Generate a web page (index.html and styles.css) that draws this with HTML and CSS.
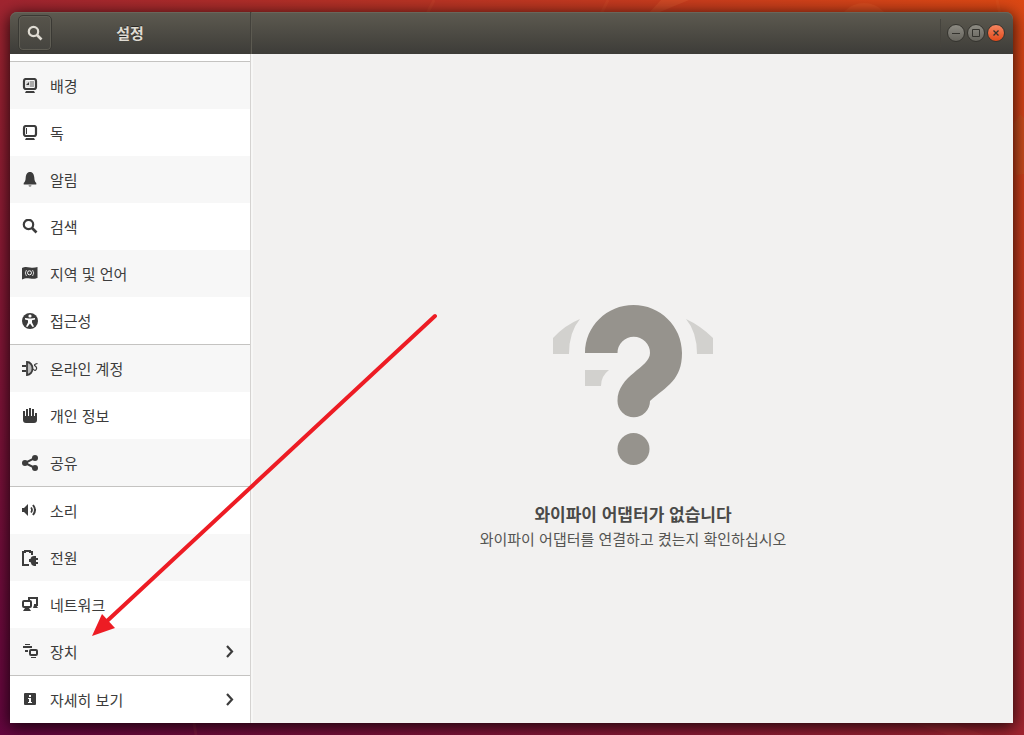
FILE: index.html
```html
<!DOCTYPE html>
<html lang="ko">
<head>
  <meta charset="UTF-8" />
  <meta name="viewport" content="width=device-width, initial-scale=1.0"/>
  <title>설정</title>
  <link rel="stylesheet" href="styles.css">
</head>
<body>
  <svg class="wallpaper" viewBox="0 0 1024 735" preserveAspectRatio="none" aria-hidden="true">
    <path d="M434 0l-7 14M608 0l-7 14M997 0l3 14M191 705l5 30" stroke="#ff8a50" stroke-opacity=".08" stroke-width="3" fill="none"/>
    <path d="M661 0h28l-34 14h-7z" fill="#ff8a50" fill-opacity=".15"/>
    <circle cx="864" cy="30" r="27" fill="#ff8a50" fill-opacity=".12"/>
    <path d="M1014 124l6-10 4 4v56l-8 1z" fill="#a08030" fill-opacity=".16"/>
    <path d="M890 715h40l54 20h-36z" fill="#ff8a50" fill-opacity=".06"/>
  </svg>

  <div class="window">
    <header class="titlebar">
      <div class="titlebar-side">
        <button class="search-button" type="button" aria-label="검색">
          <svg class="icon" viewBox="0 0 16 16"><circle cx="6.500" cy="6.500" r="4.700" fill="none" stroke="currentColor" stroke-width="2.200"/><path d="M10 10l4.500 4.500" stroke="currentColor" stroke-width="2.600"/></svg>
        </button>
        <h1 class="title">설정</h1>
      </div>
      <div class="titlebar-main">
        <div class="controls">
          <button class="control" type="button" aria-label="최소화"><svg viewBox="0 0 16 16"><path d="M4 8.500h8" stroke="currentColor"/></svg></button>
          <button class="control" type="button" aria-label="최대화"><svg viewBox="0 0 16 16"><path d="M4.500 4.500h7v7h-7z" fill="none" stroke="currentColor"/></svg></button>
          <button class="control close" type="button" aria-label="닫기"><svg viewBox="0 0 16 16"><path d="M5.500 5.500l5 5M10.500 5.500l-5 5" stroke="currentColor" stroke-width="1.300"/></svg></button>
        </div>
      </div>
    </header>

    <div class="body">
      <nav class="sidebar">
        <ul class="group">
          <li><a class="row shaded" href="#background">
            <svg class="icon" viewBox="0 0 16 16"><rect x="2" y="1" width="12" height="10" rx="2" fill="none" stroke="currentColor" stroke-width="2.200"/><path d="M4 3h4v6H4z" fill="#ddd"/><path d="M8 3h4v6H8z" fill="#aaa"/><path d="M4 7l3-3v3z" fill="currentColor"/><path d="M4 13h8l1 2H3z" fill="currentColor"/></svg>
            <span>배경</span></a></li>
          <li><a class="row" href="#dock">
            <svg class="icon" viewBox="0 0 16 16"><rect x="2" y="1" width="12" height="10" rx="2" fill="none" stroke="currentColor" stroke-width="2.200"/><path d="M4 3h1v6H4z" fill="currentColor"/><path d="M4 13h8l1 2H3z" fill="currentColor"/></svg>
            <span>독</span></a></li>
          <li><a class="row shaded" href="#notifications">
            <svg class="icon" viewBox="0 0 16 16"><path d="M8 0C5 0 4 2.500 3.700 5.500c-.2 3-.5 4-2 5.500v1.500h12.600V11c-1.500-1.500-1.800-2.500-2-5.500C12 2.500 11 0 8 0zM6.500 13.500a1.500 1 0 0 0 3 0z" fill="currentColor"/></svg>
            <span>알림</span></a></li>
          <li><a class="row" href="#search">
            <svg class="icon" viewBox="0 0 16 16"><circle cx="6.500" cy="5.500" r="4.700" fill="none" stroke="currentColor" stroke-width="2.200"/><path d="M10 9l4.500 4.500" stroke="currentColor" stroke-width="2.600"/></svg>
            <span>검색</span></a></li>
          <li><a class="row shaded" href="#region">
            <svg class="icon" viewBox="0 0 16 16"><path d="M0 2c3-1.500 5-1 8-.5s5 .2 7.500-.5v11c-3 1-4.500 1-7.500.5s-5-.5-8 1z" fill="currentColor"/><circle cx="7.500" cy="6.800" r="2" fill="none" stroke="#f6f6f6"/><path d="M4.500 4q-2.500 3 0 6M10.500 4q2.500 3 0 6" fill="none" stroke="#f6f6f6" stroke-width=".8"/></svg>
            <span>지역 및 언어</span></a></li>
          <li><a class="row" href="#access">
            <svg class="icon" viewBox="0 0 16 16"><circle cx="8" cy="8" r="8" fill="currentColor"/><circle cx="8" cy="3" r="1.600" fill="#fff"/><path d="M3 5l4 .5h2l4-.5v1.500L10 7.200v2.300l2 4-1.400.6L8 10.500l-2.600 3.600-1.400-.6 2-4V7.200L3 6.500z" fill="#fff"/></svg>
            <span>접근성</span></a></li>
        </ul>
        <ul class="group">
          <li><a class="row shaded" href="#accounts">
            <svg class="icon" viewBox="0 0 16 16"><path d="M0 4h4v2H0zM0 9h4v2H0z" fill="currentColor"/><path d="M5 1v13c3.500 0 5.500-3.500 5.500-6.500S8.500 1 5 1z" fill="#bbb" stroke="currentColor" stroke-width="1.800"/><path d="M11 8q2 2.500 3.200.5t-1-3.500 2.300-2.500" fill="none" stroke="currentColor" stroke-width="1.200"/></svg>
            <span>온라인 계정</span></a></li>
          <li><a class="row" href="#privacy">
            <svg class="icon" viewBox="0 0 16 16"><path d="M1 3h2v5h1V1h2v7h1V0h2v8h1V1h2v7h1V5h2v7q0 3-3 3H4q-3 0-3-3z" fill="currentColor"/></svg>
            <span>개인 정보</span></a></li>
          <li><a class="row shaded" href="#sharing">
            <svg class="icon" viewBox="0 0 16 16"><path d="M13 2.800L3 8l10 5" fill="none" stroke="currentColor" stroke-width="2"/><g fill="currentColor"><circle cx="3" cy="8" r="3"/><circle cx="13" cy="3" r="3"/><circle cx="13" cy="13" r="3"/></g></svg>
            <span>공유</span></a></li>
        </ul>
        <ul class="group">
          <li><a class="row" href="#sound">
            <svg class="icon" viewBox="0 0 16 16"><path d="M0 5h2l4-4v12L2 9H0z" fill="currentColor"/><path d="M9 4.500q2 2.500 0 5" fill="none" stroke="currentColor" stroke-width="1.700"/><path d="M11 2q4 5 0 10" fill="none" stroke="currentColor" stroke-width="2"/></svg>
            <span>소리</span></a></li>
          <li><a class="row shaded" href="#power">
            <svg class="icon" viewBox="0 0 16 16"><path d="M7 15H1V2h2V1h5v1h2v3" fill="none" stroke="currentColor" stroke-width="2"/><path d="M14 6v2h2v2h-2v2h2v2h-2v2h-2q-3-1-3.500-4H7V9h1.500Q9 6 12 6z" fill="currentColor"/></svg>
            <span>전원</span></a></li>
          <li><a class="row" href="#network">
            <svg class="icon" viewBox="0 0 16 16"><path d="M7 3V1h8v7h-3" fill="none" stroke="currentColor" stroke-width="2"/><rect x="1" y="4" width="8" height="6" rx="1" fill="none" stroke="currentColor" stroke-width="2"/><path d="M3 11h4l2 3H1zM12 8h2l2 3h-5z" fill="currentColor"/></svg>
            <span>네트워크</span></a></li>
          <li><a class="row shaded" href="#devices">
            <svg class="icon" viewBox="0 0 16 16"><path d="M3 0h5v1H3zM1 2h9v2H1zM3 6h3v2H3z" fill="currentColor"/><rect x="8" y="6" width="7" height="5" rx="1" fill="none" stroke="currentColor" stroke-width="2"/><path d="M9 13h5v1H9z" fill="currentColor"/></svg>
            <span>장치</span>
            <svg class="icon chevron" viewBox="0 0 16 16"><path d="M5 2l5 5.500L5 13" fill="none" stroke="currentColor" stroke-width="2.200"/></svg></a></li>
        </ul>
        <ul class="group">
          <li><a class="row" href="#details">
            <svg class="icon" viewBox="0 0 16 16"><rect x="2" y="1" width="12" height="12" rx="1" fill="currentColor"/><path d="M7 3h2v2H7zM6 6h3v4h1v1H6v-1h1V7H6z" fill="#fff"/></svg>
            <span>자세히 보기</span>
            <svg class="icon chevron" viewBox="0 0 16 16"><path d="M5 2l5 5.500L5 13" fill="none" stroke="currentColor" stroke-width="2.200"/></svg></a></li>
        </ul>
      </nav>

      <main class="content">
        <svg class="question" viewBox="0 0 160 160" aria-hidden="true">
          <g fill="#d2d1ce">
            <path d="M0 33Q12 20 27 14Q16 27 16 49H0z"/>
            <path d="M160 33Q148 21 133 14Q144 27 144 49H160z"/>
            <path d="M32 65H56Q48 71 48 81H32z"/>
          </g>
          <g fill="#96938d">
            <path d="M32 48C32 21 54 0 80.500 0S129 21 129 48C129 75 114 81 97 96A16 16 0 0 1 64.500 96C64.500 70 97 63 97 48A16 16 0 0 0 64.500 48z"/>
            <circle cx="80.500" cy="144" r="16"/>
          </g>
        </svg>
        <h2 class="message">와이파이 어댑터가 없습니다</h2>
        <p class="hint">와이파이 어댑터를 연결하고 켰는지 확인하십시오</p>
      </main>
    </div>
  </div>

  <!-- pointer to the devices row -->
  <svg class="pointer" viewBox="0 0 360 340" aria-hidden="true">
    <path d="M355 16L26 322" stroke="#ed1c24" stroke-width="4" stroke-linecap="round"/>
    <path d="M12 336L22 314L35 328z" fill="#ed1c24"/>
  </svg>
</body>
</html>
```

FILE: styles.css
```css
* {
  box-sizing: border-box;
}
body {
  position: relative;
  display: flex;
  min-height: 100vh;
  margin: 0;
  padding: 12px 11px 12px 10px;
  background: linear-gradient(to top right, #64063f, #a02530 50%, #dc4814);
  color: #3c3c3c;
  font-family: "Noto Sans CJK KR", "Noto Sans", sans-serif;
  font-size: 15px;
}
.wallpaper {
  position: absolute;
  inset: 0;
  width: 100%;
  height: 100%;
}
.window {
  position: relative;
  flex: 1;
  display: flex;
  flex-direction: column;
  border-radius: 7px 7px 0 0;
  box-shadow: 0 3px 16px 1px rgba(0, 0, 0, 0.8);
}

/* title bar */
.titlebar {
  display: flex;
  height: 42px;
  border-radius: 7px 7px 0 0;
  background: linear-gradient(#5d5a50, #3d3c38);
  box-shadow: inset 0 1px #69665b;
  color: #dfdbd2;
}
.titlebar-side {
  display: grid;
  grid-template-columns: 34px 1fr 34px;
  align-items: center;
  width: 241px;
  padding: 0 8px;
  border-right: 1px solid #43413b;
}
.search-button {
  display: flex;
  align-items: center;
  justify-content: center;
  height: 36px;
  padding: 0;
  border: 1px solid #3a3934;
  border-radius: 5px;
  background: linear-gradient(#57544b, #45443f);
  box-shadow: inset 0 0 0 1px #5f5d54;
  color: #dfdbd2;
}
.title {
  margin: 0;
  font-size: 15px;
  line-height: 24px;
  text-align: center;
  text-shadow: 0 -1px rgba(0, 0, 0, 0.5);
}
.titlebar-main {
  flex: 1;
  display: flex;
  align-items: center;
  justify-content: flex-end;
  padding-right: 8px;
  border-left: 1px solid #5c5a51;
}
.controls {
  display: flex;
  align-items: center;
  gap: 2px;
  height: 28px;
  padding-left: 6px;
  border-left: 1px solid #45433d;
}
.control {
  width: 18px;
  height: 18px;
  padding: 0;
  border: 1px solid #35342f;
  border-radius: 50%;
  background: linear-gradient(#8d8b83, #66645d);
  color: #34332e;
}
.control svg {
  display: block;
  width: 16px;
  height: 16px;
}
.close {
  background: linear-gradient(#f58560, #e24a1b);
}

/* settings list */
.body {
  flex: 1;
  display: flex;
  background: #f2f1f0;
}
.sidebar {
  width: 241px;
  padding-top: 7px;
  border-right: 1px solid #d5d3d1;
  background: #fff;
}
.group {
  margin: 0;
  padding: 0;
  border-top: 1px solid #c4c3c1;
  list-style: none;
}
.row {
  display: flex;
  align-items: center;
  gap: 12px;
  height: 47px;
  padding: 0 12px;
  color: #3c3c3c;
  line-height: 24px;
  text-decoration: none;
}
.shaded {
  background: #f7f7f7;
}
.icon {
  flex: none;
  width: 16px;
  height: 16px;
}
.chevron {
  margin-left: auto;
}

/* empty state */
.content {
  flex: 1;
  display: flex;
  flex-direction: column;
  align-items: center;
  justify-content: center;
  padding-top: 78px;
  border-left: 2px solid #f7f7f6;
}
.question {
  width: 160px;
  height: 160px;
  margin-bottom: 36px;
}
.message {
  margin: 0;
  color: #4a4a48;
  font-size: 17px;
  line-height: 26px;
}
.hint {
  margin: 0;
  color: #555553;
  line-height: 24px;
}

.pointer {
  position: absolute;
  top: 300px;
  left: 80px;
  width: 360px;
  height: 340px;
  pointer-events: none;
}
```
